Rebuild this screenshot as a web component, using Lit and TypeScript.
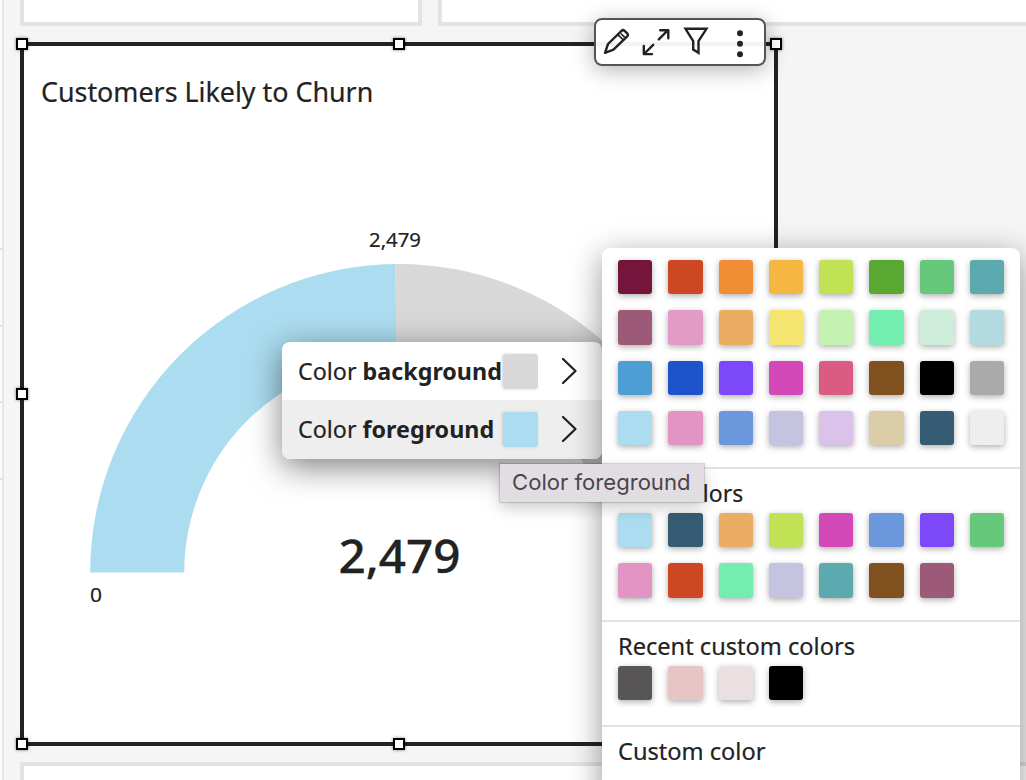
import { LitElement, html, css, svg } from "lit";
import { customElement, property } from "lit/decorators.js";

const PALETTE = [
  "#76153c", "#cd4722", "#f18e35", "#f5b742", "#c2e255", "#58a832", "#66c87a", "#5caab0",
  "#9d5a78", "#e29ac6", "#ebad64", "#f4e470", "#c5f2b1", "#74eeae", "#ceedda", "#b1dae1",
  "#4c9ed5", "#1d53cb", "#7d49f8", "#d349b7", "#da5c82", "#80501f", "#000000", "#aaaaaa",
  "#abdcef", "#e294c4", "#6b98dc", "#c4c4e1", "#dbc2ea", "#dccda9", "#365c74", "#eeeeee",
];
const THEME = [
  "#abdcef", "#365c74", "#ebad64", "#c2e255", "#d349b7", "#6b98dc", "#7d49f8", "#66c87a",
  "#e294c4", "#cd4722", "#74eeae", "#c4c4e1", "#5caab0", "#80501f", "#9d5a78",
];
const RECENT = ["#575556", "#e8c5c5", "#eae0e1", "#000000"];

@customElement("color-swatches")
class ColorSwatches extends LitElement {
  @property({ attribute: false }) colors: string[] = [];
  static styles = css`
    :host { display: grid; grid-template-columns: repeat(8, 34.3px); column-gap: 15.99px; row-gap: 16.1px; }
    .swatch { height: 34.3px; border-radius: 3px; box-shadow: 0 2px 6px rgba(0, 0, 0, 0.32); }
  `;
  render() {
    return this.colors.map((c) => html`<div class="swatch" style="background:${c}"></div>`);
  }
}

@customElement("gauge-chart")
class GaugeChart extends LitElement {
  static styles = css`
    :host { display: block; }
    svg { display: block; }
    text { font-family: "Noto Sans", "Open Sans", sans-serif; fill: #222; }
    .label { font-size: 19.5px; stroke: #222; stroke-width: 0.2px; }
    .value { font-size: 46px; font-weight: 500; stroke: #222; stroke-width: 0.3px; }
  `;
  render() {
    return html`<svg width="750" height="580" viewBox="24 140 750 580">
      ${svg`
      <path d="M395.3 264 A308.5 308.5 0 0 1 707.2 572.5 H613.2 A214.5 214.5 0 0 0 396.5 358 Z" fill="#d8d8d8"></path>
      <path d="M90.2 572.5 A308.5 308.5 0 0 1 395.4 264 L396.5 358 A214.5 214.5 0 0 0 184.2 572.5 Z" fill="#abdcef"></path>
      <text class="label" x="369" y="247" textLength="52" lengthAdjust="spacingAndGlyphs">2,479</text>
      <text class="label" x="90" y="602" textLength="12" lengthAdjust="spacingAndGlyphs">0</text>
      <text class="value" x="338.5" y="573" textLength="122" lengthAdjust="spacingAndGlyphs">2,479</text>`}
    </svg>`;
  }
}

@customElement("app-root")
class AppRoot extends LitElement {
  static styles = css`
    :host {
      display: block; position: relative; width: 1026px; height: 780px; overflow: hidden;
      background: #f5f5f5; color: #222; font-family: "Noto Sans", "Open Sans", sans-serif;
    }
    * { box-sizing: border-box; }
    .page { display: flex; height: 100%; }
    .rail { width: 4px; flex: none; background: #fafafa; border-right: 2px solid #e6e6e6; display: flex; flex-direction: column; padding-top: 248px; gap: 74.5px; }
    .tick { height: 2px; flex: none; background: #e0e0e0; }
    .sheet { flex: none; width: 1100px; margin-left: 16px; display: flex; flex-direction: column; gap: 16px; }
    .row { display: flex; gap: 16px; height: 26px; flex: none; }
    .panel { background: #fff; border: 4px solid #e3e3e3; }
    .row .panel { border-top: 0; }
    .narrow { width: 402px; }
    .wide { flex: 1; }
    .bottom { flex: 1; border-bottom: 0; }
    .card { position: relative; flex: none; width: 758px; height: 704px; background: #fff; border: 4px solid #222; }
    .title { height: 94px; padding: 27px 0 0 16.5px; font-size: 27px; line-height: 38px; white-space: nowrap; }
    .fit { display: inline-block; transform-origin: 0 50%; white-space: nowrap; -webkit-text-stroke: 0.2px #222; }
    .fit b { -webkit-text-stroke: 0; }
    .handle { position: absolute; width: 12px; height: 12px; background: #fff; border: 2px solid #000; box-shadow: 0 0 3px rgba(0, 0, 0, 0.5); }
    .l { left: -8px; } .c { left: 369px; } .r { right: -8px; }
    .t { top: -8px; } .m { top: 342px; } .b { bottom: -8px; }
    .toolbar {
      position: absolute; left: 594px; top: 18px; width: 172px; height: 48px; background: rgba(255, 255, 255, 0.95);
      border: 2px solid #545454; border-radius: 8px; box-shadow: 0 4px 22px rgba(0, 0, 0, 0.3);
    }
    .toolbar svg { display: block; }
    .menu {
      position: absolute; left: 282px; top: 342px; width: 320px; height: 117px; background: #fff; border-radius: 8px;
      box-shadow: 0 8px 32px rgba(0, 0, 0, 0.5);
    }
    .item { height: 58px; display: flex; align-items: center; padding-left: 16px; font-size: 24px; border-radius: 8px 8px 0 0; }
    .item.active { height: 59px; background: #eee; border-radius: 0 0 8px 8px; }
    .name { width: 205px; padding-bottom: 2px; }
    .chip { width: 35px; height: 35px; border-radius: 3px; box-shadow: -1px 0 3px rgba(0, 0, 0, 0.15); }
    .item svg { margin: 0 0 1px 22px; }
    .picker {
      position: absolute; left: 602px; top: 248px; width: 418px; height: 560px; background: #fff; border-radius: 8px;
      box-shadow: 0 8px 32px rgba(0, 0, 0, 0.42);
    }
    .group { padding-left: 16px; border-bottom: 2px solid #e3e3e3; }
    .palette { height: 221px; padding-top: 12px; }
    .theme { height: 153px; padding-top: 7px; }
    .recent { height: 105px; padding-top: 7px; }
    .custom { padding-top: 7px; border: 0; }
    .heading { height: 37px; font-size: 24px; line-height: 34px; white-space: nowrap; }
    .tooltip {
      position: absolute; left: 500px; top: 464px; width: 204px; height: 38px; padding-left: 12px; background: #e2dde3;
      color: #49464a; font: 22.1px/36px Inter, sans-serif; white-space: nowrap; box-shadow: 0 0 1px 1px rgba(0, 0, 0, 0.14), 0 6px 16px rgba(0, 0, 0, 0.2);
    }
  `;

  private item(name: string, color: string, active: boolean) {
    return html`<div class="item ${active ? "active" : ""}">
      <div class="name"><span class="fit" style="transform:scaleX(${0.97})">Color <b>${name}</b></span></div>
      <div class="chip" style="background:${color}"></div>
      <svg width="20" height="30" viewBox="0 0 20 30" fill="none" stroke="#222" stroke-width="2.3" stroke-linecap="round" stroke-linejoin="round"><path d="M3 3 L15.5 15 L3 27"></path></svg>
    </div>`;
  }

  render() {
    return html`
      <div class="page">
        <div class="rail">${[0, 1, 2, 3].map(() => html`<div class="tick"></div>`)}</div>
        <div class="sheet">
          <div class="row"><div class="panel narrow"></div><div class="panel wide"></div></div>
          <div class="card">
            <div class="title"><span class="fit" style="transform:scaleX(0.994)">Customers Likely to Churn</span></div>
            <gauge-chart></gauge-chart>
            ${["l t", "c t", "r t", "l m", "l b", "c b"].map((p) => html`<div class="handle ${p}"></div>`)}
          </div>
          <div class="panel bottom"></div>
        </div>
      </div>
      <div class="toolbar">
        <svg width="168" height="44" viewBox="596 20 168 44" fill="none" stroke="#222" stroke-width="2.4" stroke-linecap="round" stroke-linejoin="round">
          <path d="M605 52.8 L608 44 L621.5 30.8 Q623 29.4 624.6 30.9 L627.2 33.4 Q628.7 34.9 627.2 36.4 L613.5 49.6 Z"></path>
          <path d="M617.8 34.6 L623.4 40 M621.3 34 L624.2 36.8" stroke-width="1.7"></path>
          <path d="M658.8 39.4 L667.5 30.7 M660.2 30.2 H668.3 V38.3 M653.2 44.8 L644.5 53.5 M643.8 46 V54.1 H652"></path>
          <path d="M685.5 28.8 H706.5 L698.5 41 V52.8 L693.2 49.6 V41 Z" stroke-linejoin="miter"></path>
          <g fill="#222" stroke="none"><circle cx="740" cy="33.3" r="3"></circle><circle cx="740" cy="43.8" r="3"></circle><circle cx="740" cy="54.3" r="3"></circle></g>
        </svg>
      </div>
      <div class="menu">
        ${this.item("background", "#d8d8d8", false)}
        ${this.item("foreground", "#abdcef", true)}
      </div>
      <div class="picker">
        <div class="group palette"><color-swatches .colors=${PALETTE}></color-swatches></div>
        <div class="group theme"><div class="heading"><span class="fit" style="transform:scaleX(0.958)">Main colors</span></div><color-swatches .colors=${THEME}></color-swatches></div>
        <div class="group recent"><div class="heading"><span class="fit" style="transform:scaleX(0.983)">Recent custom colors</span></div><color-swatches .colors=${RECENT}></color-swatches></div>
        <div class="group custom"><div class="heading"><span class="fit" style="transform:scaleX(0.983)">Custom color</span></div></div>
      </div>
      <div class="tooltip">Color foreground</div>
    `;
  }
}
